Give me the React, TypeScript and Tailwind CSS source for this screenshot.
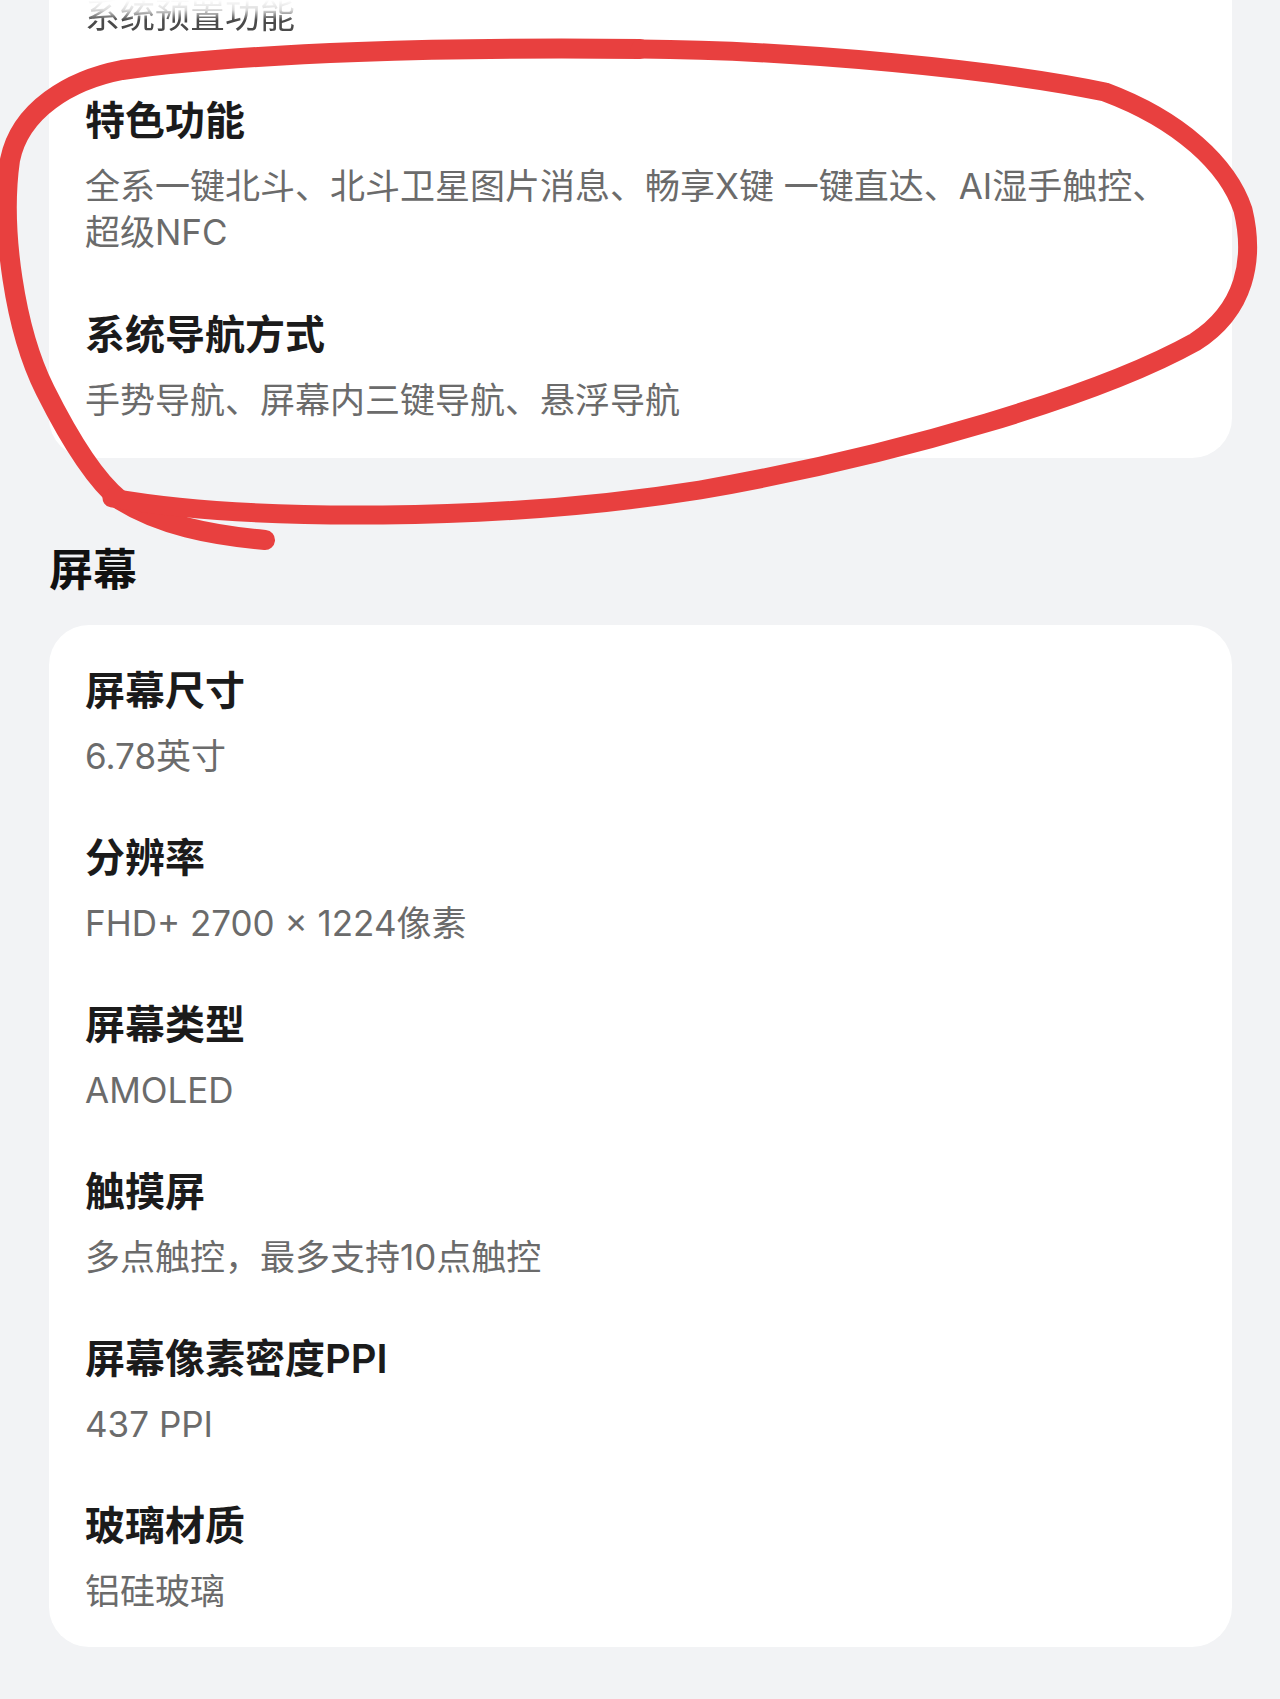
import React from "react";

type Item = { title: string; value: React.ReactNode };

const topItems: Item[] = [
  {
    title: "特色功能",
    value: "全系一键北斗、北斗卫星图片消息、畅享X键 一键直达、AI湿手触控、超级NFC",
  },
  { title: "系统导航方式", value: "手势导航、屏幕内三键导航、悬浮导航" },
];

const screenItems: Item[] = [
  { title: "屏幕尺寸", value: "6.78英寸" },
  { title: "分辨率", value: "FHD+ 2700 × 1224像素" },
  { title: "屏幕类型", value: "AMOLED" },
  { title: "触摸屏", value: "多点触控，最多支持10点触控" },
  { title: "屏幕像素密度PPI", value: "437 PPI" },
  { title: "玻璃材质", value: "铝硅玻璃" },
];

function Spec({ item }: { item: Item }) {
  return (
    <div className="flex flex-col gap-[18px]">
      <div className="text-[40px] leading-[48px] font-semibold text-[#1b1b1b]">{item.title}</div>
      <div className="text-[35px] leading-[46px] text-[#6b6b6b]">{item.value}</div>
    </div>
  );
}

export default function App() {
  return (
    <div className="relative w-[1280px] h-[1699px] overflow-hidden bg-[#f2f3f5] font-[Inter,'Noto_Sans_CJK_SC',sans-serif]">
      <div className="flex flex-col pl-[49px] pr-[48px]">
        {/* top card (cut off at the top) */}
        <div className="flex flex-col gap-[56px] rounded-b-[40px] bg-white pl-[36px] pr-[47px] pb-[35px]">
          <div className="mt-[-8px] mb-[3px] text-[35px] leading-[46px] text-[#4a4a4a] blur-[0.6px]">系统预置功能</div>
          {topItems.map((it) => (
            <Spec key={it.title} item={it} />
          ))}
        </div>

        <div className="mt-[86px] mb-[29px] text-[44px] leading-[52px] font-semibold text-[#111111]">屏幕</div>

        <div className="flex flex-col gap-[55px] rounded-[40px] bg-white pl-[36px] pr-[47px] pt-[42px] pb-[33px]">
          {screenItems.map((it) => (
            <Spec key={it.title} item={it} />
          ))}
        </div>
      </div>

      <div className="pointer-events-none absolute left-[49px] top-0 h-[20px] w-[1183px] bg-linear-to-b from-white via-white/80 to-transparent" />

      <svg
        className="pointer-events-none absolute left-0 top-0"
        width="1280"
        height="1699"
        viewBox="0 0 1280 1699"
        fill="none"
      >
        <path
          d="M 640 49 C 450 47, 250 52, 122 70 C 70 80, 20 110, 10 160 C 0 230, 15 330, 45 390 C 70 440, 95 480, 120 500 C 160 525, 210 535, 265 540"
          stroke="#e8403f"
          strokeWidth="20"
          strokeLinecap="round"
          strokeLinejoin="round"
        />
        <path
          d="M 640 49 C 800 50, 1000 70, 1105 92 C 1180 120, 1228 165, 1243 210 C 1255 260, 1245 310, 1195 342 C 1100 395, 900 455, 700 490 C 500 522, 250 522, 112 498"
          stroke="#e8403f"
          strokeWidth="19"
          strokeLinecap="round"
          strokeLinejoin="round"
        />
      </svg>
    </div>
  );
}
